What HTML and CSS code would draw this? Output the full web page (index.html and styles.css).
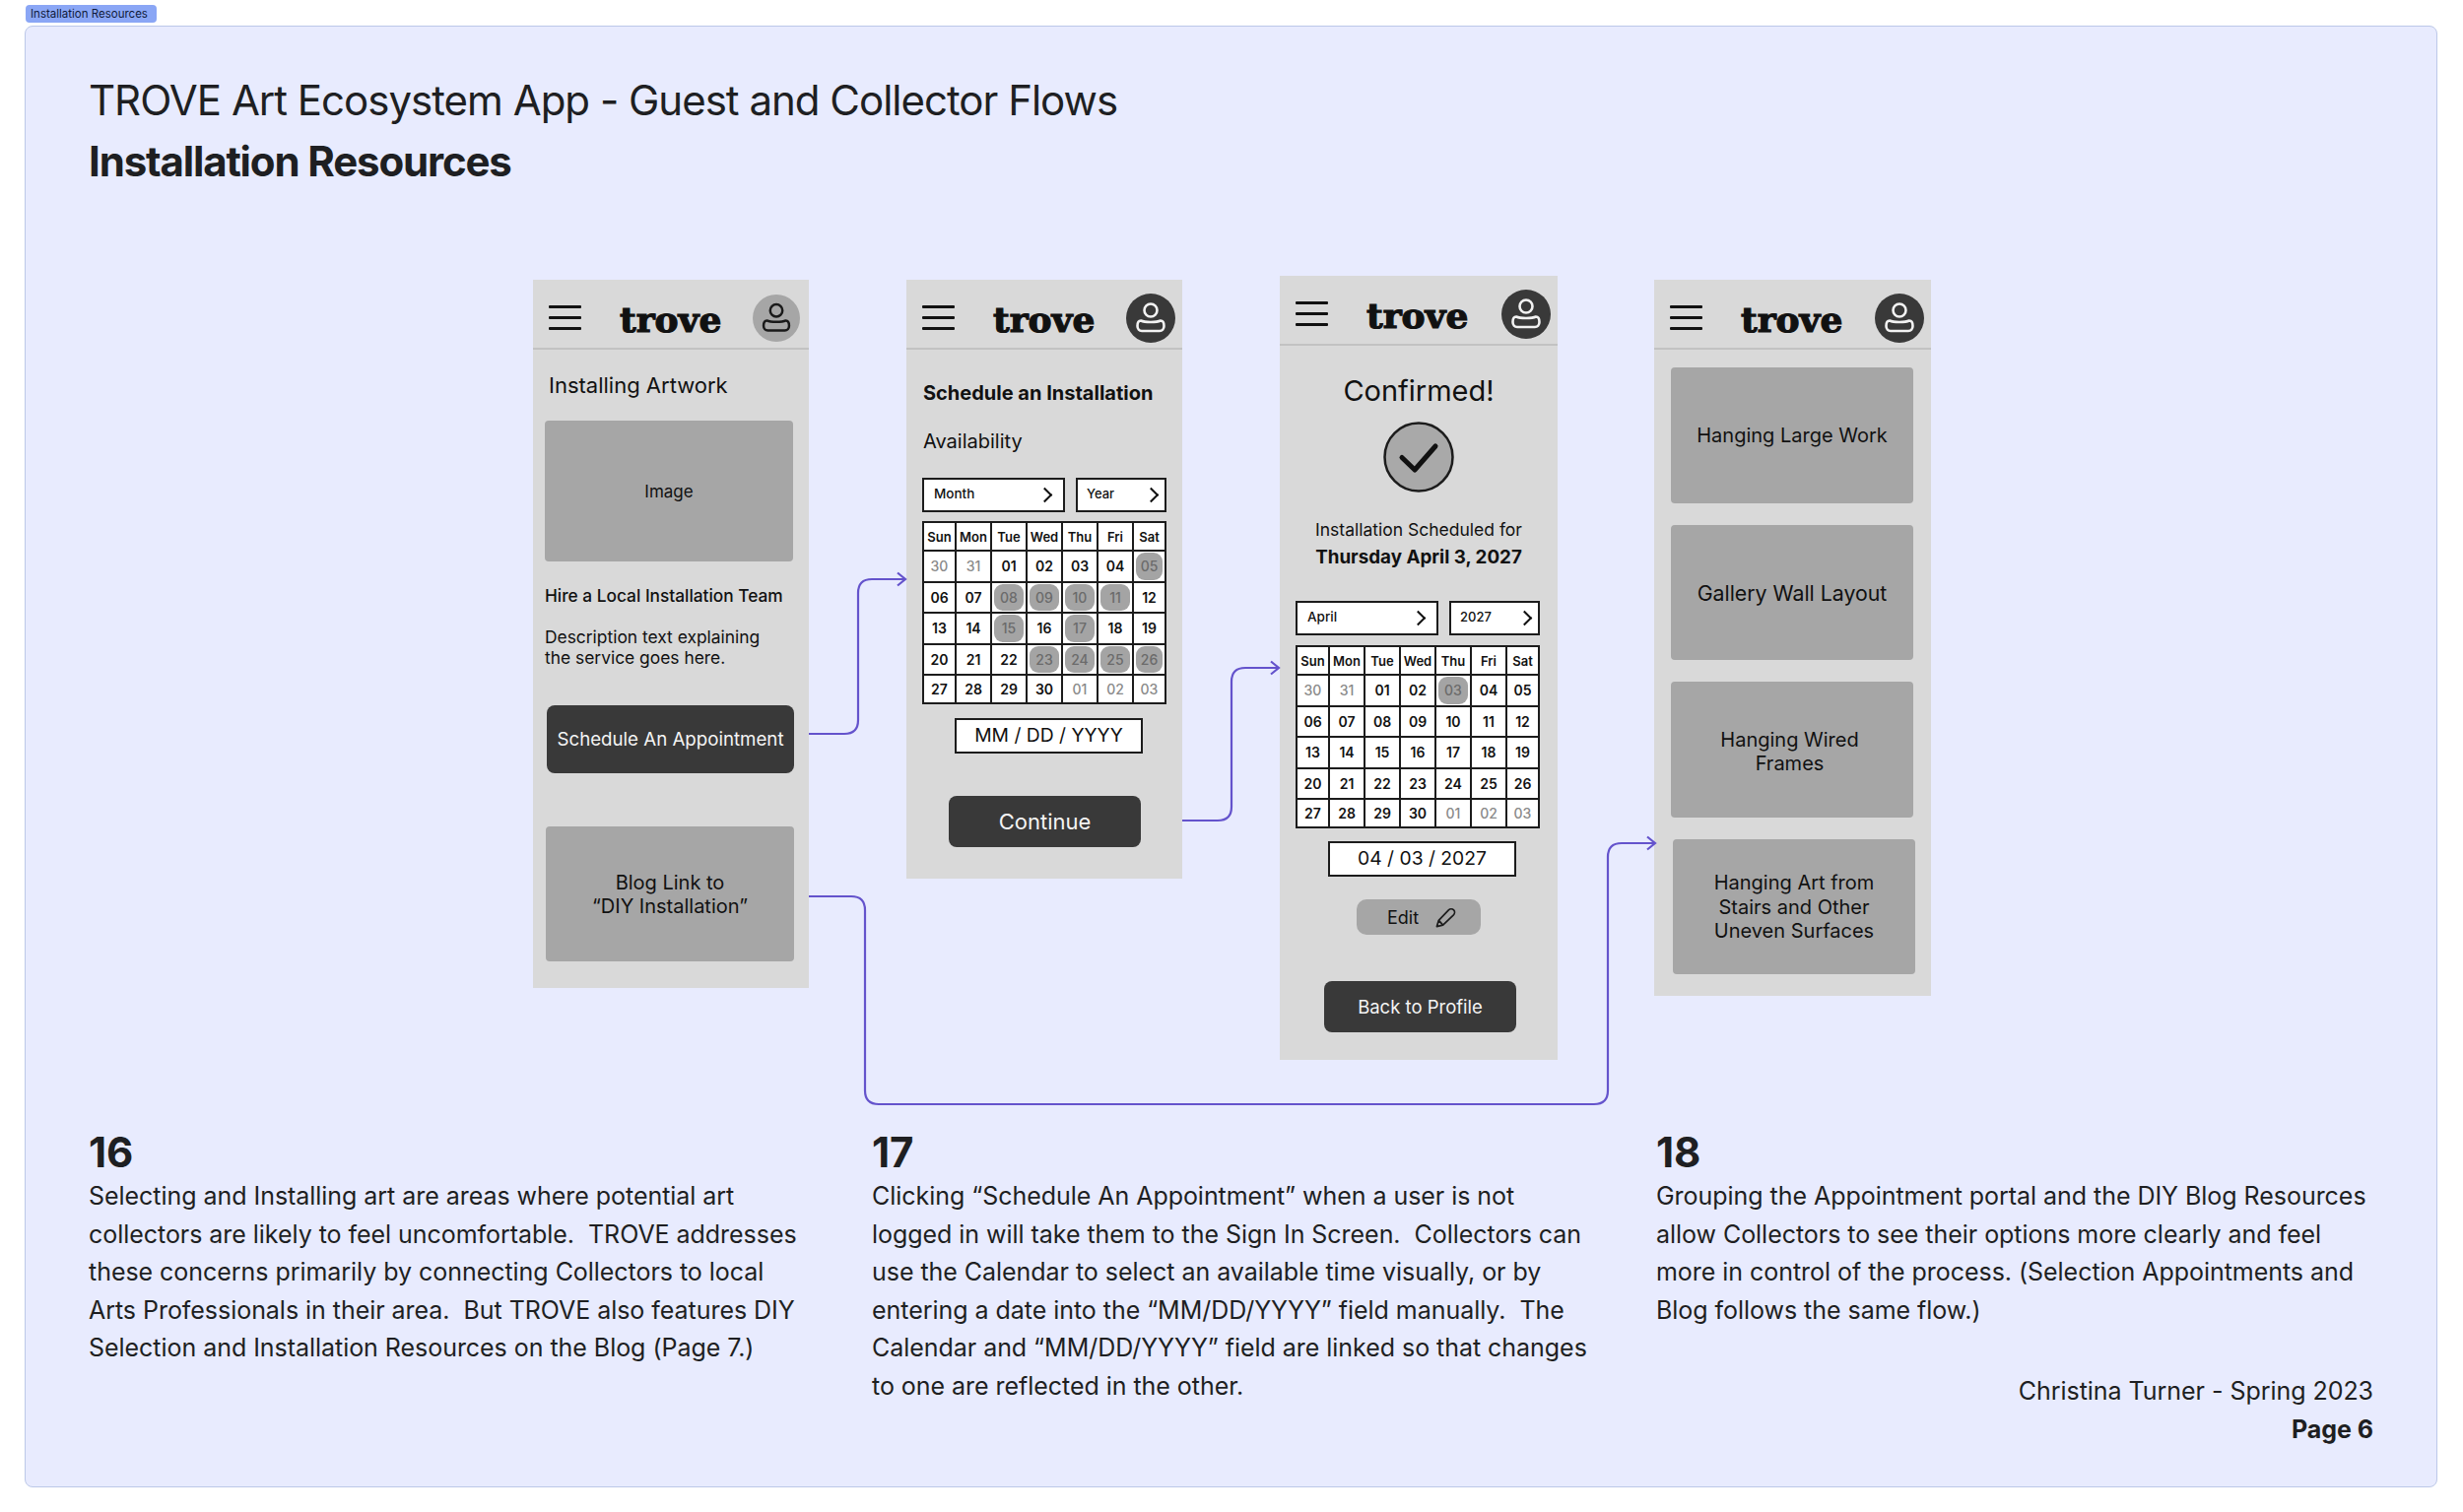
FILE: index.html
```html
<!DOCTYPE html>
<html lang="en">
<head>
  <meta charset="UTF-8">
  <title>Installation Resources</title>
  <link rel="stylesheet" href="styles.css">
</head>
<body>

  <div class="frame-tag">Installation Resources</div>

  <div class="board">
    <h1 class="title">TROVE Art Ecosystem App - Guest and Collector Flows</h1>
    <h2 class="subtitle">Installation Resources</h2>

    <div class="canvas">

      <!-- 16: landing -->
      <div class="phone phone-1">
        <div class="phone-head">
          <div class="burger"><i></i><i></i><i></i></div>
          <div class="logo">trove</div>
          <svg class="avatar avatar-light" viewBox="0 0 50 50"><circle class="face" cx="25" cy="25" r="25"/><circle class="line" cx="25" cy="17" r="6.5"/><path class="line" d="M15 27.5C19 29.5 31 29.5 35 27.5C37.5 27.5 38.5 30 38.5 33C38.5 36 36.5 38 34 38H16C13.5 38 11.5 36 11.5 33C11.5 30 12.5 27.5 15 27.5Z"/></svg>
        </div>
        <div class="install-title">Installing Artwork</div>
        <div class="tile image-tile">Image</div>
        <div class="hire">Hire a Local Installation Team</div>
        <div class="desc">Description text explaining<br>the service goes here.</div>
        <div class="btn schedule-btn">Schedule An Appointment</div>
        <div class="tile blog-tile">Blog Link to<br>“DIY Installation”</div>
      </div>

      <!-- 17: calendar -->
      <div class="phone phone-2">
        <div class="phone-head">
          <div class="burger"><i></i><i></i><i></i></div>
          <div class="logo">trove</div>
          <svg class="avatar" viewBox="0 0 50 50"><circle class="face" cx="25" cy="25" r="25"/><circle class="line" cx="25" cy="17" r="6.5"/><path class="line" d="M15 27.5C19 29.5 31 29.5 35 27.5C37.5 27.5 38.5 30 38.5 33C38.5 36 36.5 38 34 38H16C13.5 38 11.5 36 11.5 33C11.5 30 12.5 27.5 15 27.5Z"/></svg>
        </div>
        <div class="schedule-title">Schedule an Installation</div>
        <div class="availability">Availability</div>
        <div class="selects">
          <div class="select select-month">Month</div>
          <div class="select select-year">Year</div>
        </div>
        <div class="cal">
          <div class="dow">Sun</div><div class="dow">Mon</div><div class="dow">Tue</div><div class="dow">Wed</div><div class="dow">Thu</div><div class="dow">Fri</div><div class="dow">Sat</div>
          <div class="day off">30</div><div class="day off">31</div><div class="day">01</div><div class="day">02</div><div class="day">03</div><div class="day">04</div><div class="day on"><span>05</span></div>
          <div class="day">06</div><div class="day">07</div><div class="day on"><span>08</span></div><div class="day on"><span>09</span></div><div class="day on"><span>10</span></div><div class="day on"><span>11</span></div><div class="day">12</div>
          <div class="day">13</div><div class="day">14</div><div class="day on"><span>15</span></div><div class="day">16</div><div class="day on"><span>17</span></div><div class="day">18</div><div class="day">19</div>
          <div class="day">20</div><div class="day">21</div><div class="day">22</div><div class="day on"><span>23</span></div><div class="day on"><span>24</span></div><div class="day on"><span>25</span></div><div class="day on"><span>26</span></div>
          <div class="day">27</div><div class="day">28</div><div class="day">29</div><div class="day">30</div><div class="day off">01</div><div class="day off">02</div><div class="day off">03</div>
        </div>
        <div class="date-box">MM / DD / YYYY</div>
        <div class="btn continue-btn">Continue</div>
      </div>

      <!-- 17: confirmed -->
      <div class="phone phone-3">
        <div class="phone-head">
          <div class="burger"><i></i><i></i><i></i></div>
          <div class="logo">trove</div>
          <svg class="avatar" viewBox="0 0 50 50"><circle class="face" cx="25" cy="25" r="25"/><circle class="line" cx="25" cy="17" r="6.5"/><path class="line" d="M15 27.5C19 29.5 31 29.5 35 27.5C37.5 27.5 38.5 30 38.5 33C38.5 36 36.5 38 34 38H16C13.5 38 11.5 36 11.5 33C11.5 30 12.5 27.5 15 27.5Z"/></svg>
        </div>
        <div class="confirmed">Confirmed!</div>
        <svg class="check" viewBox="0 0 72 72"><circle cx="36" cy="36" r="34.5" fill="#a9a9a9" stroke="#1c1c1c" stroke-width="2.5"/><path d="M19 36.5L32 49L53 25" fill="none" stroke="#111" stroke-width="5" stroke-linecap="round" stroke-linejoin="round"/></svg>
        <div class="scheduled">Installation Scheduled for</div>
        <div class="scheduled-date">Thursday April 3, 2027</div>
        <div class="selects selects-confirm">
          <div class="select select-month">April</div>
          <div class="select select-year">2027</div>
        </div>
        <div class="cal cal-confirm">
          <div class="dow">Sun</div><div class="dow">Mon</div><div class="dow">Tue</div><div class="dow">Wed</div><div class="dow">Thu</div><div class="dow">Fri</div><div class="dow">Sat</div>
          <div class="day off">30</div><div class="day off">31</div><div class="day">01</div><div class="day">02</div><div class="day on"><span>03</span></div><div class="day">04</div><div class="day">05</div>
          <div class="day">06</div><div class="day">07</div><div class="day">08</div><div class="day">09</div><div class="day">10</div><div class="day">11</div><div class="day">12</div>
          <div class="day">13</div><div class="day">14</div><div class="day">15</div><div class="day">16</div><div class="day">17</div><div class="day">18</div><div class="day">19</div>
          <div class="day">20</div><div class="day">21</div><div class="day">22</div><div class="day">23</div><div class="day">24</div><div class="day">25</div><div class="day">26</div>
          <div class="day">27</div><div class="day">28</div><div class="day">29</div><div class="day">30</div><div class="day off">01</div><div class="day off">02</div><div class="day off">03</div>
        </div>
        <div class="date-box date-filled">04 / 03 / 2027</div>
        <div class="edit-btn">
          <span>Edit</span>
          <svg viewBox="0 0 22 22"><path d="M1.5 20.5L3.5 14L14 3C15.5 1.5 18 1.5 19.5 3C21 4.5 20.5 7 19 8.5L8 19Z M3.5 14L8 19" fill="none" stroke="#1c1c1c" stroke-width="1.8" stroke-linejoin="round"/></svg>
        </div>
        <div class="btn back-btn">Back to Profile</div>
      </div>

      <!-- 18: resources -->
      <div class="phone phone-4">
        <div class="phone-head">
          <div class="burger"><i></i><i></i><i></i></div>
          <div class="logo">trove</div>
          <svg class="avatar" viewBox="0 0 50 50"><circle class="face" cx="25" cy="25" r="25"/><circle class="line" cx="25" cy="17" r="6.5"/><path class="line" d="M15 27.5C19 29.5 31 29.5 35 27.5C37.5 27.5 38.5 30 38.5 33C38.5 36 36.5 38 34 38H16C13.5 38 11.5 36 11.5 33C11.5 30 12.5 27.5 15 27.5Z"/></svg>
        </div>
        <div class="resource-list">
          <div class="tile resource">Hanging Large Work</div>
          <div class="tile resource resource-gallery">Gallery Wall Layout</div>
          <div class="tile resource resource-wired">Hanging Wired<br>Frames</div>
          <div class="tile resource resource-last">Hanging Art from<br>Stairs and Other<br>Uneven Surfaces</div>
        </div>
      </div>

      <svg class="wires" viewBox="26 195 2447 950" width="2447" height="950">
        <path d="M821 745H857Q871 745 871 731V602Q871 588 885 588H919M911 581.5L919 588L911 594.5"/>
        <path d="M821 910H864Q878 910 878 924V1107Q878 1121 892 1121H1618Q1632 1121 1632 1107V870Q1632 856 1646 856H1679M1672 849.5L1680 856L1672 862.5"/>
        <path d="M1200 833H1236Q1250 833 1250 819V692Q1250 678 1264 678H1298M1290 671.5L1298 678L1290 684.5"/>
      </svg>
    </div>

    <div class="notes">
      <div class="note">
        <div class="note-num">16</div>
        <p>Selecting and Installing art are areas where potential art<br>collectors are likely to feel uncomfortable.&nbsp; TROVE addresses<br>these concerns primarily by connecting Collectors to local<br>Arts Professionals in their area.&nbsp; But TROVE also features DIY<br>Selection and Installation Resources on the Blog (Page 7.)</p>
      </div>
      <div class="note">
        <div class="note-num">17</div>
        <p>Clicking “Schedule An Appointment” when a user is not<br>logged in will take them to the Sign In Screen.&nbsp; Collectors can<br>use the Calendar to select an available time visually, or by<br>entering a date into the “MM/DD/YYYY” field manually.&nbsp; The<br>Calendar and “MM/DD/YYYY” field are linked so that changes<br>to one are reflected in the other.</p>
      </div>
      <div class="note">
        <div class="note-num">18</div>
        <p>Grouping the Appointment portal and the DIY Blog Resources<br>allow Collectors to see their options more clearly and feel<br>more in control of the process. (Selection Appointments and<br>Blog follows the same flow.)</p>
        <div class="credit">Christina Turner - Spring 2023<br><b>Page 6</b></div>
      </div>
    </div>
  </div>

</body>
</html>
```

FILE: styles.css
```css
body {
  margin: 0;
  background: #fff;
  font-family: Inter, "Noto Sans", sans-serif;
  color: #1e1f22;
}

.frame-tag {
  position: absolute;
  left: 26px;
  top: 5px;
  width: 133px;
  height: 18px;
  box-sizing: border-box;
  padding-left: 5px;
  background: #8aa6f5;
  border-radius: 4px;
  font-size: 11.5px;
  line-height: 18px;
  color: #0f1a3a;
  white-space: nowrap;
}

.board {
  box-sizing: border-box;
  width: 2449px;
  height: 1484px;
  margin: 26px 0 0 25px;
  padding-top: 44px;
  background: #e8ebfe;
  border: 1px solid #bcc8e8;
  border-radius: 8px;
}

.title {
  margin: 0 0 0 64px;
  font-size: 42px;
  line-height: 62px;
  font-weight: 400;
  letter-spacing: -1px;
}

.subtitle {
  margin: 0 0 0 64px;
  font-size: 42px;
  line-height: 62px;
  font-weight: 700;
  letter-spacing: -1.15px;
}

.canvas {
  position: relative;
  height: 950px;
}

.wires {
  position: absolute;
  left: 0;
  top: 0;
  pointer-events: none;
}

.wires path {
  fill: none;
  stroke: #6453cc;
  stroke-width: 2.2;
}

/* phones sit on a free canvas */
.phone {
  position: absolute;
  width: 280px;
  background: #d9d9d9;
  color: #111;
}

.phone-1 { left: 515px; top: 89px; height: 719px; }
.phone-2 { left: 894px; top: 89px; height: 608px; }
.phone-3 { left: 1273px; top: 85px; height: 796px; width: 282px; }
.phone-4 { left: 1653px; top: 89px; height: 727px; width: 281px; }

.phone-head {
  box-sizing: border-box;
  display: flex;
  align-items: center;
  height: 71px;
  padding: 8px 7px 0 16px;
  border-bottom: 2px solid #c2c2c2;
}

.burger {
  width: 33px;
}

.burger i {
  display: block;
  height: 3px;
  margin: 8px 0;
  background: #111;
  border-radius: 1px;
}

.logo {
  margin-left: 39px;
  padding-top: 3px;
  width: 104px;
  font-family: "DejaVu Serif", serif;
  font-weight: 700;
  font-size: 36px;
  line-height: 40px;
  letter-spacing: 0;
  color: #111;
  -webkit-text-stroke: 1.2px #111;
}

.avatar {
  width: 50px;
  height: 50px;
  margin-left: auto;
  fill: none;
}

.avatar .face { fill: #393939; }
.avatar .line { stroke: #f2f2f2; stroke-width: 2.6; }
.avatar-light { width: 48px; height: 48px; margin-right: 2px; }
.avatar-light .face { fill: #a6a6a6; }
.avatar-light .line { stroke: #1a1a1a; }

.tile {
  display: flex;
  align-items: center;
  justify-content: center;
  text-align: center;
  background: #a6a6a6;
  border-radius: 4px;
  font-size: 20px;
  line-height: 24px;
}

.btn {
  display: flex;
  align-items: center;
  justify-content: center;
  background: #393939;
  border-radius: 8px;
  color: #f4f4f4;
  font-size: 20px;
}

/* phone 1 */
.install-title {
  margin: 23px 0 0 16px;
  font-size: 22px;
  line-height: 26px;
}

.image-tile {
  width: 252px;
  height: 143px;
  margin: 23px 0 0 12px;
  font-size: 17px;
}

.hire {
  margin: 24px 0 0 12px;
  font-size: 17.3px;
  line-height: 22px;
  font-weight: 500;
}

.desc {
  margin: 20px 0 0 12px;
  font-size: 17.4px;
  line-height: 21px;
}

.schedule-btn {
  width: 251px;
  height: 69px;
  margin: 38px 0 0 14px;
  font-size: 18.7px;
}

.blog-tile {
  width: 252px;
  height: 137px;
  margin: 54px 0 0 13px;
}

/* phone 2 */
.schedule-title {
  margin: 32px 0 0 17px;
  font-size: 20px;
  line-height: 24px;
  font-weight: 700;
}

.availability {
  margin: 24px 0 0 17px;
  font-size: 20px;
  line-height: 26px;
}

.selects {
  display: flex;
  gap: 11px;
  margin: 24px 0 0 16px;
}

.selects-confirm {
  margin-top: 31px;
}

.select {
  box-sizing: border-box;
  position: relative;
  height: 35px;
  padding-left: 10px;
  background: #fff;
  border: 2px solid #1c1c1c;
  font-size: 13.5px;
  line-height: 28px;
  font-weight: 500;
}

.select::after {
  content: "";
  position: absolute;
  right: 13px;
  top: 10px;
  width: 9px;
  height: 9px;
  border-top: 2.5px solid #111;
  border-right: 2.5px solid #111;
  transform: rotate(45deg);
}

.select-month { width: 145px; }
.select-year { width: 92px; padding-left: 9px; font-size: 13px; }
.select-year::after { right: 8px; }

.cal {
  display: grid;
  grid-template-columns: 31px 34px 34px 34px 34px 34px 31px;
  grid-template-rows: 27px 29.5px 29.5px 29.5px 29.5px 27px;
  gap: 2px;
  width: max-content;
  margin: 9px 0 0 16px;
  padding: 2px;
  background: #1c1c1c;
  font-size: 14px;
  font-weight: 600;
}

.cal-confirm {
  margin-top: 10px;
}

.dow,
.day {
  display: flex;
  align-items: center;
  justify-content: center;
  background: #fff;
}

.dow {
  font-size: 13px;
}

.off {
  color: #8a8a8a;
  font-weight: 500;
}

.on {
  padding: 1px 2px;
}

.on span {
  display: flex;
  align-items: center;
  justify-content: center;
  width: 100%;
  height: 100%;
  background: #a4a4a4;
  border-radius: 9px;
  color: #6b6b6b;
  font-weight: 500;
}

.date-box {
  box-sizing: border-box;
  width: 191px;
  height: 36px;
  margin: 14px 0 0 49px;
  background: #fff;
  border: 2px solid #1c1c1c;
  text-align: center;
  font-size: 19.3px;
  line-height: 30px;
}

.continue-btn {
  width: 195px;
  height: 52px;
  margin: 43px 0 0 43px;
  font-size: 22px;
}

/* phone 3 */
.confirmed {
  margin-top: 29px;
  text-align: center;
  font-size: 29px;
  line-height: 34px;
}

.check {
  display: block;
  width: 72px;
  height: 72px;
  margin: 14px auto 0;
}

.scheduled {
  margin-top: 26px;
  text-align: center;
  font-size: 17.5px;
  line-height: 24px;
}

.scheduled-date {
  margin-top: 3px;
  text-align: center;
  font-size: 18.8px;
  line-height: 26px;
  font-weight: 700;
}

.date-filled {
  margin-top: 13px;
}

.edit-btn {
  box-sizing: border-box;
  display: flex;
  align-items: center;
  justify-content: center;
  gap: 17px;
  width: 126px;
  height: 36px;
  margin: 23px 0 0 78px;
  padding-left: 6px;
  background: #a6a6a6;
  border-radius: 10px;
  font-size: 18px;
}

.edit-btn svg {
  width: 21px;
  height: 21px;
}

.back-btn {
  width: 195px;
  height: 52px;
  margin: 47px 0 0 45px;
  font-size: 18.5px;
}

/* phone 4 */
.resource-list {
  display: flex;
  flex-direction: column;
  gap: 22px;
  padding: 18px 0 0 17px;
}

.resource {
  box-sizing: border-box;
  width: 246px;
  height: 137.5px;
  padding-top: 1px;
  line-height: 24.5px;
}

.resource-gallery {
  font-size: 21.3px;
}

.resource-wired {
  padding: 5px 5px 0 0;
}

.resource-last {
  margin-left: 2px;
}

/* notes under the flows */
.notes {
  display: grid;
  grid-template-columns: 795px 796px 728px;
  padding-left: 64px;
}

.note-num {
  font-size: 42px;
  line-height: 50px;
  font-weight: 700;
}

.note p {
  margin: 0;
  font-size: 25px;
  line-height: 38.6px;
  letter-spacing: -0.04px;
}

.credit {
  margin-top: 44px;
  text-align: right;
  font-size: 25px;
  line-height: 38.6px;
  letter-spacing: -0.04px;
}

.credit b {
  font-weight: 700;
}
```
